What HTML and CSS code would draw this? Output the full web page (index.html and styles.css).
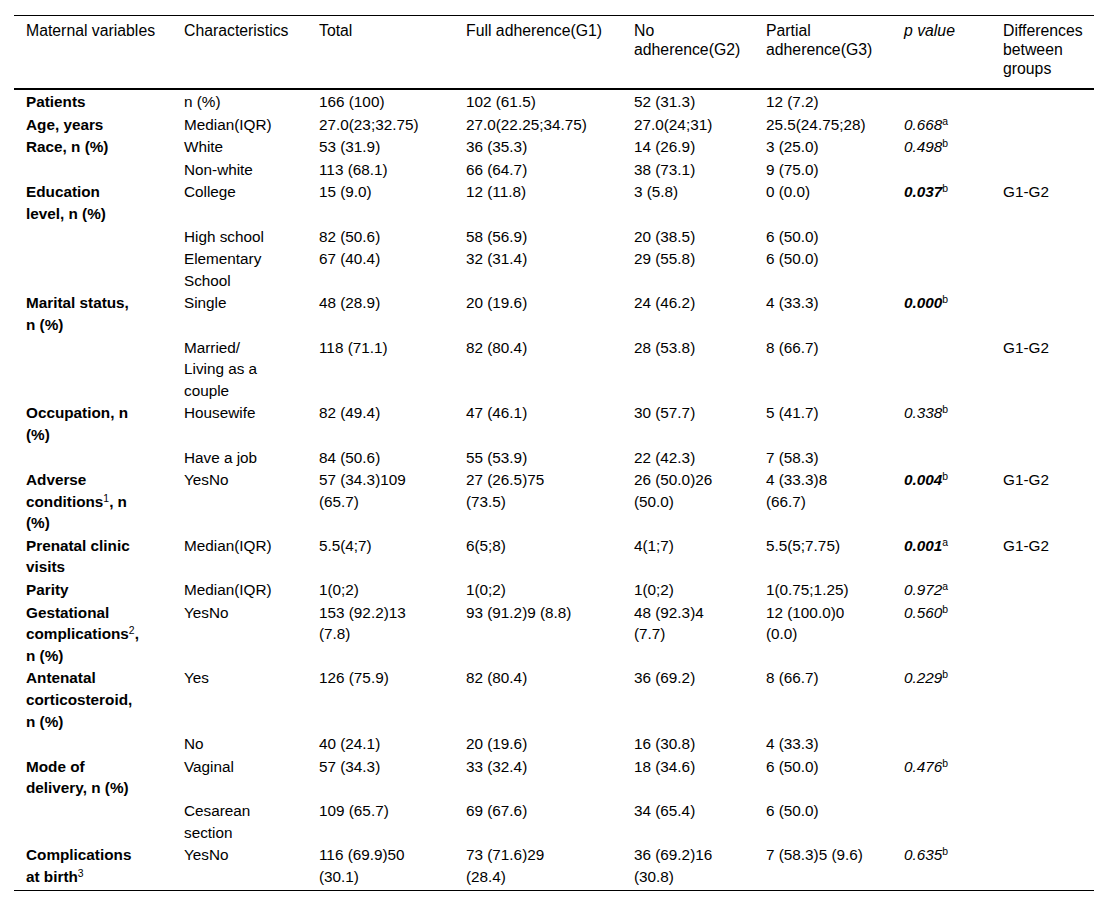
FILE: index.html
```html
<!DOCTYPE html>
<html lang="en">
<head>
<meta charset="utf-8">
<title>Maternal variables</title>
<link rel="stylesheet" href="styles.css">
</head>
<body>
<table class="data">
  <colgroup>
    <col class="c1"><col class="c2"><col class="c3"><col class="c4"><col class="c5"><col class="c6"><col class="c7"><col class="c8">
  </colgroup>
  <thead>
    <tr>
      <th>Maternal variables</th>
      <th>Characteristics</th>
      <th>Total</th>
      <th>Full adherence(G1)</th>
      <th>No<br>adherence(G2)</th>
      <th>Partial<br>adherence(G3)</th>
      <th><i>p value</i></th>
      <th>Differences<br>between<br>groups</th>
    </tr>
  </thead>
  <tbody>
    <tr><td class="var">Patients</td><td>n (%)</td><td>166 (100)</td><td>102 (61.5)</td><td>52 (31.3)</td><td>12 (7.2)</td><td></td><td></td></tr>
    <tr><td class="var">Age, years</td><td>Median(IQR)</td><td>27.0(23;32.75)</td><td>27.0(22.25;34.75)</td><td>27.0(24;31)</td><td>25.5(24.75;28)</td><td class="p">0.668<sup>a</sup></td><td></td></tr>
    <tr><td class="var">Race, n (%)</td><td>White</td><td>53 (31.9)</td><td>36 (35.3)</td><td>14 (26.9)</td><td>3 (25.0)</td><td class="p">0.498<sup>b</sup></td><td></td></tr>
    <tr><td class="var"></td><td>Non-white</td><td>113 (68.1)</td><td>66 (64.7)</td><td>38 (73.1)</td><td>9 (75.0)</td><td></td><td></td></tr>
    <tr><td class="var">Education<br>level, n (%)</td><td>College</td><td>15 (9.0)</td><td>12 (11.8)</td><td>3 (5.8)</td><td>0 (0.0)</td><td class="p sig">0.037<sup>b</sup></td><td>G1-G2</td></tr>
    <tr><td class="var"></td><td>High school</td><td>82 (50.6)</td><td>58 (56.9)</td><td>20 (38.5)</td><td>6 (50.0)</td><td></td><td></td></tr>
    <tr><td class="var"></td><td>Elementary<br>School</td><td>67 (40.4)</td><td>32 (31.4)</td><td>29 (55.8)</td><td>6 (50.0)</td><td></td><td></td></tr>
    <tr><td class="var">Marital status,<br>n (%)</td><td>Single</td><td>48 (28.9)</td><td>20 (19.6)</td><td>24 (46.2)</td><td>4 (33.3)</td><td class="p sig">0.000<sup>b</sup></td><td></td></tr>
    <tr><td class="var"></td><td>Married/<br>Living as a<br>couple</td><td>118 (71.1)</td><td>82 (80.4)</td><td>28 (53.8)</td><td>8 (66.7)</td><td></td><td>G1-G2</td></tr>
    <tr><td class="var">Occupation, n<br>(%)</td><td>Housewife</td><td>82 (49.4)</td><td>47 (46.1)</td><td>30 (57.7)</td><td>5 (41.7)</td><td class="p">0.338<sup>b</sup></td><td></td></tr>
    <tr><td class="var"></td><td>Have a job</td><td>84 (50.6)</td><td>55 (53.9)</td><td>22 (42.3)</td><td>7 (58.3)</td><td></td><td></td></tr>
    <tr><td class="var">Adverse<br>conditions<sup>1</sup>, n<br>(%)</td><td>YesNo</td><td>57 (34.3)109<br>(65.7)</td><td>27 (26.5)75<br>(73.5)</td><td>26 (50.0)26<br>(50.0)</td><td>4 (33.3)8<br>(66.7)</td><td class="p sig">0.004<sup>b</sup></td><td>G1-G2</td></tr>
    <tr><td class="var">Prenatal clinic<br>visits</td><td>Median(IQR)</td><td>5.5(4;7)</td><td>6(5;8)</td><td>4(1;7)</td><td>5.5(5;7.75)</td><td class="p sig">0.001<sup>a</sup></td><td>G1-G2</td></tr>
    <tr><td class="var">Parity</td><td>Median(IQR)</td><td>1(0;2)</td><td>1(0;2)</td><td>1(0;2)</td><td>1(0.75;1.25)</td><td class="p">0.972<sup>a</sup></td><td></td></tr>
    <tr><td class="var">Gestational<br>complications<sup>2</sup>,<br>n (%)</td><td>YesNo</td><td>153 (92.2)13<br>(7.8)</td><td>93 (91.2)9 (8.8)</td><td>48 (92.3)4<br>(7.7)</td><td>12 (100.0)0<br>(0.0)</td><td class="p">0.560<sup>b</sup></td><td></td></tr>
    <tr><td class="var">Antenatal<br>corticosteroid,<br>n (%)</td><td>Yes</td><td>126 (75.9)</td><td>82 (80.4)</td><td>36 (69.2)</td><td>8 (66.7)</td><td class="p">0.229<sup>b</sup></td><td></td></tr>
    <tr><td class="var"></td><td>No</td><td>40 (24.1)</td><td>20 (19.6)</td><td>16 (30.8)</td><td>4 (33.3)</td><td></td><td></td></tr>
    <tr><td class="var">Mode of<br>delivery, n (%)</td><td>Vaginal</td><td>57 (34.3)</td><td>33 (32.4)</td><td>18 (34.6)</td><td>6 (50.0)</td><td class="p">0.476<sup>b</sup></td><td></td></tr>
    <tr><td class="var"></td><td>Cesarean<br>section</td><td>109 (65.7)</td><td>69 (67.6)</td><td>34 (65.4)</td><td>6 (50.0)</td><td></td><td></td></tr>
    <tr class="last"><td class="var">Complications<br>at birth<sup>3</sup></td><td>YesNo</td><td>116 (69.9)50<br>(30.1)</td><td>73 (71.6)29<br>(28.4)</td><td>36 (69.2)16<br>(30.8)</td><td>7 (58.3)5 (9.6)</td><td class="p">0.635<sup>b</sup></td><td></td></tr>
  </tbody>
</table>
</body>
</html>
```

FILE: styles.css
```css
html, body {
  margin: 0;
  padding: 0;
  background: #ffffff;
}

body {
  padding: 15px 0 0 14px;
  font-family: "Liberation Sans", Arial, Helvetica, sans-serif;
  color: #000000;
}

.data {
  width: 1080px;
  table-layout: fixed;
  border-collapse: collapse;
  border-top: 1px solid #000000;
  border-bottom: 1px solid #000000;
}

.c1 { width: 158px; }
.c2 { width: 135px; }
.c3 { width: 147px; }
.c4 { width: 168px; }
.c5 { width: 132px; }
.c6 { width: 138px; }
.c7 { width: 99px; }
.c8 { width: 103px; }

.data th {
  font-size: 15.8px;
  font-weight: normal;
  line-height: 19px;
  text-align: left;
  vertical-align: top;
  padding: 5px 0 10px 12px;
  border-bottom: 2px solid #000000;
  white-space: nowrap;
}

.data td {
  font-size: 15.3px;
  line-height: 21.6px;
  text-align: left;
  vertical-align: top;
  padding: 1px 0 0 12px;
  white-space: nowrap;
}

.data tr.last td {
  padding-bottom: 3px;
}

.data td.var {
  font-weight: bold;
}

.data td.p {
  font-style: italic;
}

.data td.sig {
  font-weight: bold;
}

.data sup {
  font-size: 0.68em;
  line-height: 0;
  vertical-align: 0.45em;
  font-weight: normal;
  font-style: normal;
}

.data td.p sup {
  font-style: normal;
}
```
